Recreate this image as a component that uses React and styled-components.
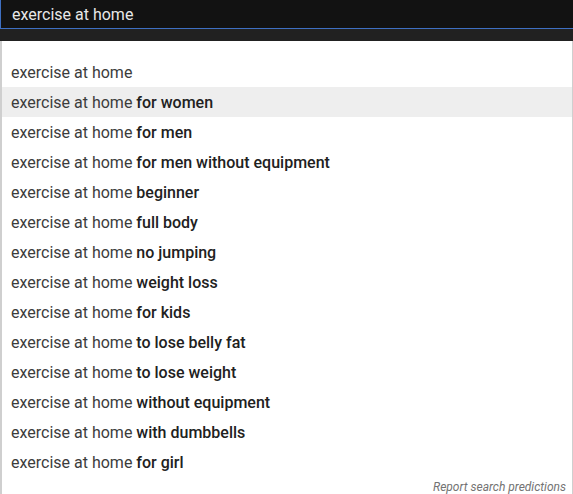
import React from "react"
import styled, { createGlobalStyle } from "styled-components"

const GlobalStyle = createGlobalStyle`
  body {
    margin: 0;
    background: #ffffff;
    font-family: Roboto, "Liberation Sans", Arial, sans-serif;
  }
`

const Page = styled.div`
  width: 573px;
  height: 494px;
  display: flex;
  flex-direction: column;
  overflow: hidden;
`

const SearchBox = styled.div`
  height: 29px;
  background: #121212;
  border-left: 1px solid #3e6fc2;
  border-bottom: 1px solid #3e6fc2;
  display: flex;
  align-items: center;
  padding-left: 11px;
  color: #e8e8e8;
  font-size: 16px;
`

const Band = styled.div`
  height: 12px;
  background: #212121;
`

const Dropdown = styled.div`
  flex: 1;
  display: flex;
  flex-direction: column;
  padding-top: 16px;
  border-left: 2px solid #cfcfcf;
  border-right: 1px solid #cfcfcf;
  background: #fff;
`

const List = styled.ul`
  list-style: none;
  margin: 0;
  padding: 0;
`

const Item = styled.li`
  height: 30px;
  display: flex;
  align-items: center;
  padding-left: 9px;
  font-size: 16px;
  color: #3c3c3c;
  background: ${(p) => (p.active ? "#eeeeee" : "transparent")};
  white-space: pre;
`

const Bold = styled.b`
  font-weight: 500;
  color: #212121;
`

const Report = styled.div`
  align-self: flex-end;
  margin-top: 3px;
  padding-right: 6px;
  font-size: 12px;
  font-style: italic;
  color: #737373;
`

const query = "exercise at home"
const suffixes = [
  "",
  "for women",
  "for men",
  "for men without equipment",
  "beginner",
  "full body",
  "no jumping",
  "weight loss",
  "for kids",
  "to lose belly fat",
  "to lose weight",
  "without equipment",
  "with dumbbells",
  "for girl",
]

export default function App() {
  return (
    <>
      <GlobalStyle />
      <Page>
        <SearchBox>{query}</SearchBox>
        <Band />
        <Dropdown>
          <List>
            {suffixes.map((s, i) => (
              <Item key={i} active={i === 1}>
                {query}
                {s && " "}
                {s && <Bold>{s}</Bold>}
              </Item>
            ))}
          </List>
          <Report>Report search predictions</Report>
        </Dropdown>
      </Page>
    </>
  )
}
